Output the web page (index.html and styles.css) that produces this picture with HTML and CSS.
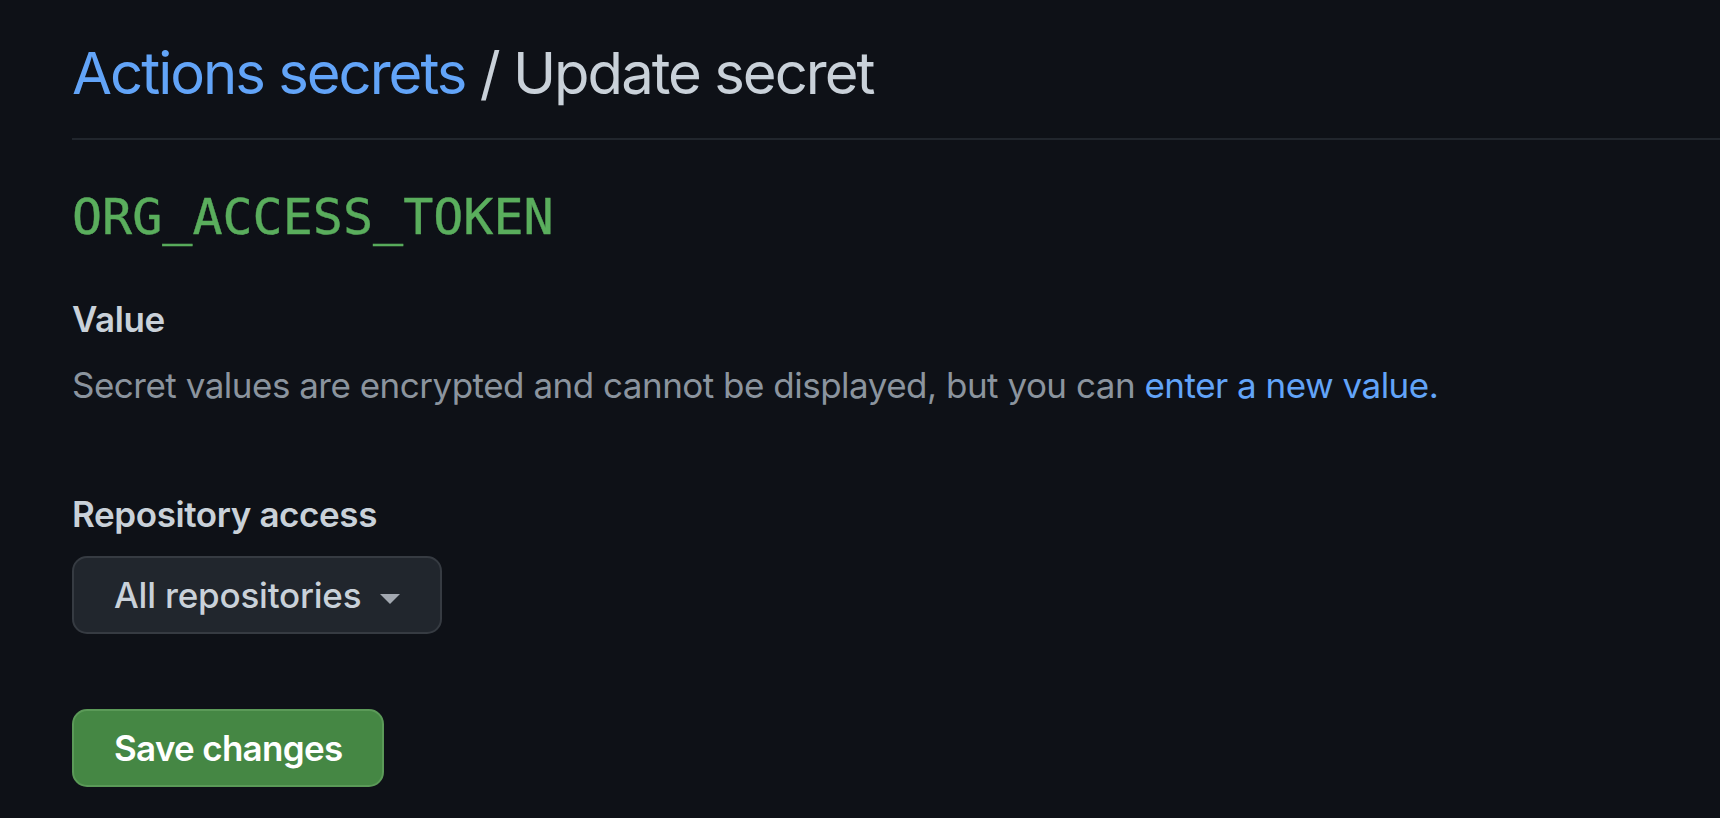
FILE: index.html
```html
<!DOCTYPE html>
<html lang="en">
<head>
<meta charset="utf-8">
<title>Update secret</title>
<link rel="stylesheet" href="styles.css">
</head>
<body>
<main class="page">
  <div class="subhead">
    <h2 class="subhead-heading"><a class="subhead-link" href="#">Actions secrets</a> / Update secret</h2>
  </div>
  <h3 class="secret-name">ORG_ACCESS_TOKEN</h3>
  <div class="field">
    <div class="field-label">Value</div>
    <p class="field-note">Secret values are encrypted and cannot be displayed, but you can <a class="note-link" href="#">enter a new value.</a></p>
  </div>
  <div class="field access">
    <div class="field-label">Repository access</div>
    <button class="select-btn" type="button"><span>All repositories</span><span class="caret"></span></button>
  </div>
  <button class="save-btn" type="button">Save changes</button>
</main>
</body>
</html>
```
FILE: styles.css
```css
html, body {
  margin: 0;
  padding: 0;
  background: #0e1117;
}
body {
  font-family: Inter, "Liberation Sans", Arial, sans-serif;
  color: #c9d1d9;
  height: 818px;
  overflow: hidden;
}
.page {
  padding-left: 72px;
  display: flex;
  flex-direction: column;
  align-items: flex-start;
}
.subhead {
  align-self: stretch;
  padding-top: 36px;
  padding-bottom: 27px;
  border-bottom: 2px solid #21262d;
}
.subhead-heading {
  margin: 0;
  font-size: 58px;
  line-height: 75px;
  font-weight: 400;
  color: #c9d1d9;
  letter-spacing: -2px;
}
.subhead-link {
  color: #62a4f8;
  text-decoration: none;
}
.secret-name {
  margin: 47px 0 0;
  font-family: "DejaVu Sans Mono", "Liberation Mono", monospace;
  font-size: 50px;
  line-height: 60px;
  font-weight: 400;
  color: #5aae5d;
  -webkit-text-stroke: 0.4px #5aae5d;
}
.field {
  display: flex;
  flex-direction: column;
  align-items: flex-start;
}
.field-label {
  margin-top: 47px;
  font-size: 35px;
  line-height: 50px;
  font-weight: 600;
  color: #c9d1d9;
  letter-spacing: -0.4px;
}
.field-note {
  margin: 16px 0 0;
  font-size: 35px;
  line-height: 50px;
  color: #8b949e;
  letter-spacing: -0.5px;
}
.note-link {
  color: #62a4f8;
  text-decoration: none;
}
.access .field-label {
  margin-top: 79px;
}
.select-btn {
  margin-top: 17px;
  height: 78px;
  display: flex;
  align-items: center;
  gap: 19px;
  padding: 0 40px;
  border: 2px solid #363b42;
  border-radius: 15px;
  background: #21262d;
  color: #c9d1d9;
  font-family: inherit;
  font-size: 35px;
  font-weight: 500;
  line-height: 50px;
  letter-spacing: -0.2px;
}
.caret {
  width: 0;
  height: 0;
  margin-top: 7px;
  border-left: 10px solid transparent;
  border-right: 10px solid transparent;
  border-top: 10px solid #a2a8b0;
}
.save-btn {
  margin-top: 75px;
  height: 78px;
  display: flex;
  align-items: center;
  padding: 0 40px;
  border: 2px solid #5b9a58;
  border-radius: 15px;
  background: #458744;
  color: #ffffff;
  font-family: inherit;
  font-size: 35px;
  font-weight: 600;
  line-height: 50px;
  letter-spacing: -0.7px;
}
```
